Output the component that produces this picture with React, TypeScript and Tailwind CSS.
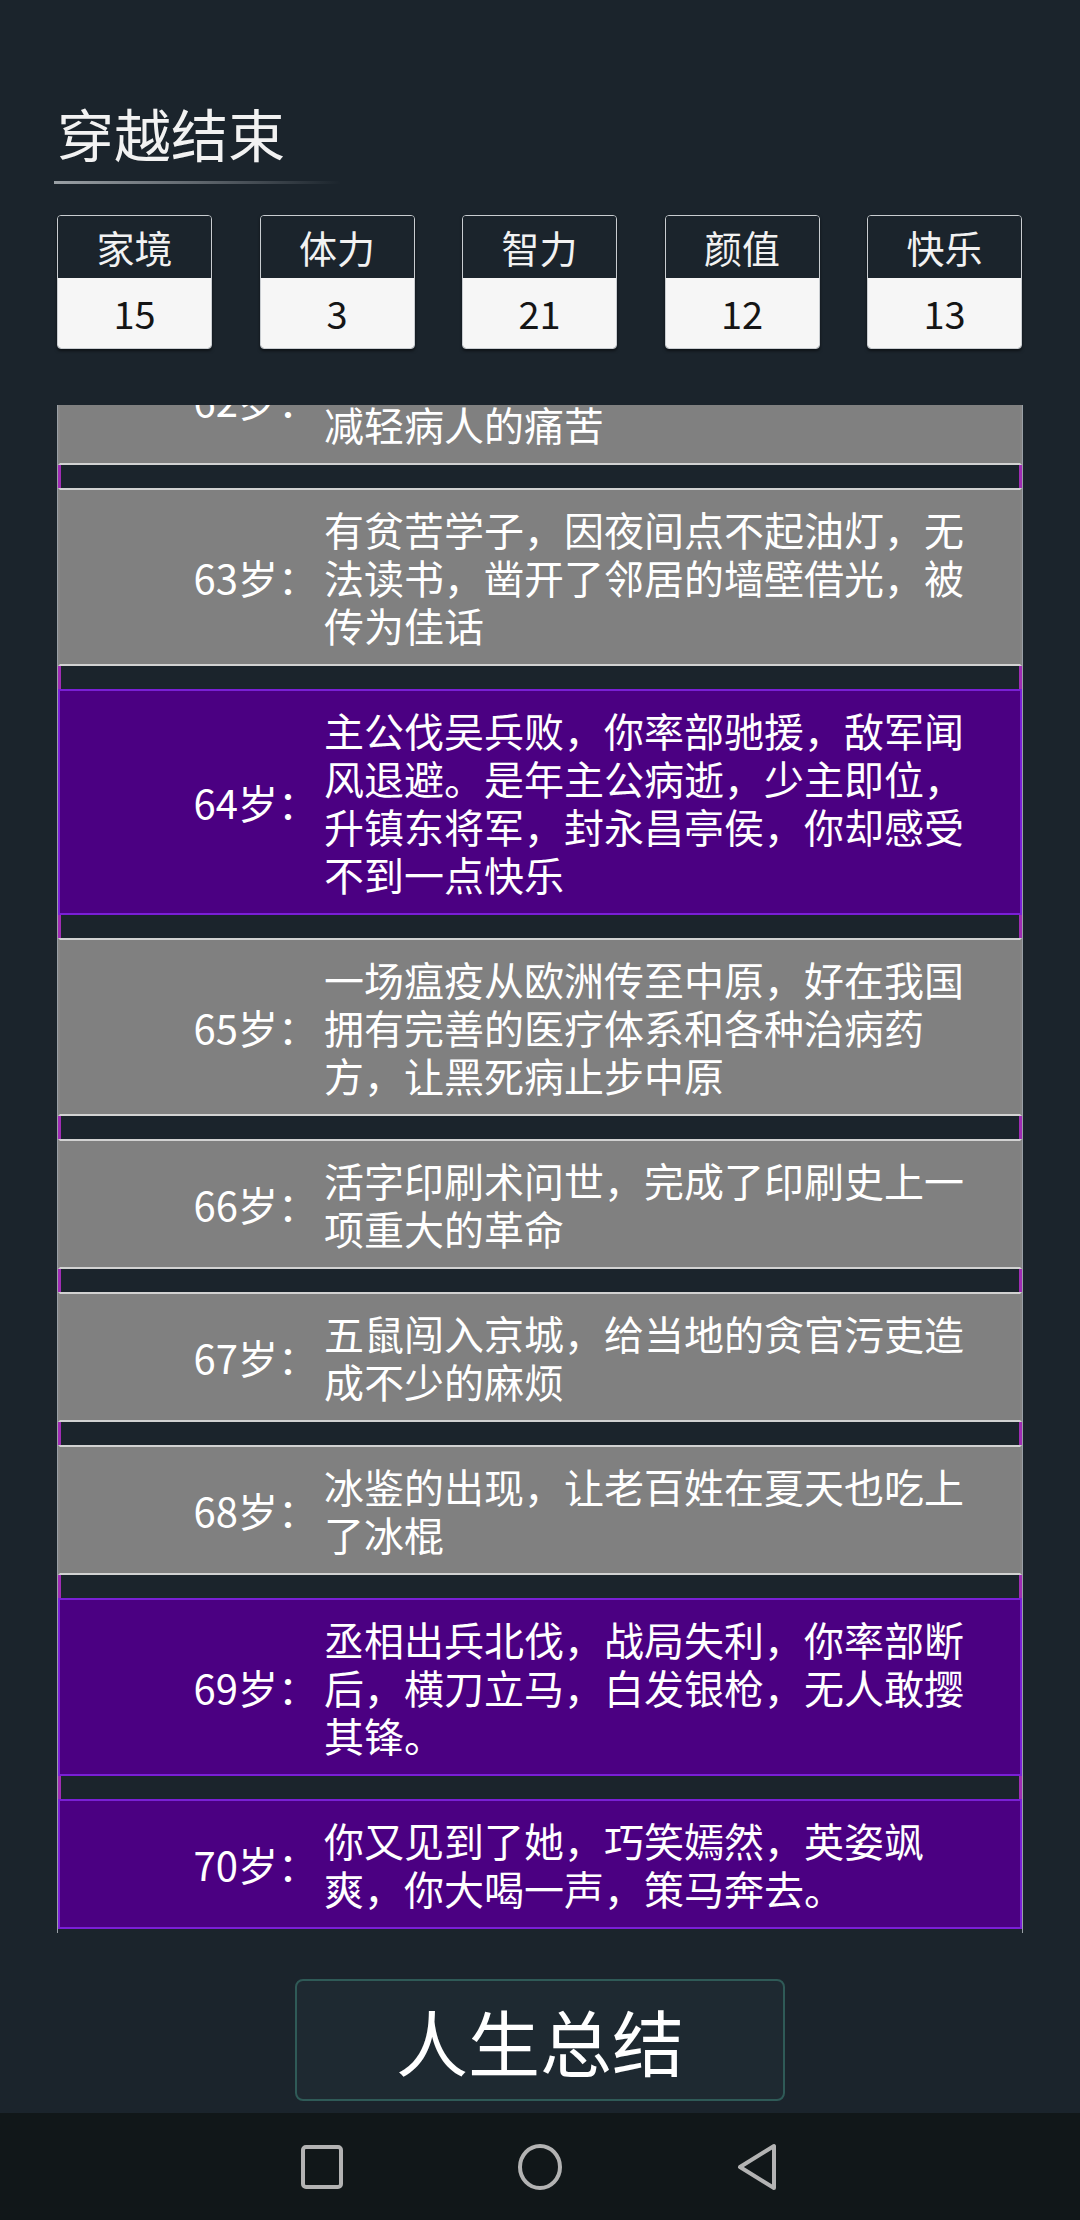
import React from "react";

type Entry = { age: number; text: string; kind: "gray" | "purple" };

const stats = [
  { label: "家境", value: 15 },
  { label: "体力", value: 3 },
  { label: "智力", value: 21 },
  { label: "颜值", value: 12 },
  { label: "快乐", value: 13 },
];

const entries: Entry[] = [
  { age: 62, text: "神医华佗研制出了麻沸散，可以大大减轻病人的痛苦", kind: "gray" },
  { age: 63, text: "有贫苦学子，因夜间点不起油灯，无法读书，凿开了邻居的墙壁借光，被传为佳话", kind: "gray" },
  { age: 64, text: "主公伐吴兵败，你率部驰援，敌军闻风退避。是年主公病逝，少主即位，升镇东将军，封永昌亭侯，你却感受不到一点快乐", kind: "purple" },
  { age: 65, text: "一场瘟疫从欧洲传至中原，好在我国拥有完善的医疗体系和各种治病药方，让黑死病止步中原", kind: "gray" },
  { age: 66, text: "活字印刷术问世，完成了印刷史上一项重大的革命", kind: "gray" },
  { age: 67, text: "五鼠闯入京城，给当地的贪官污吏造成不少的麻烦", kind: "gray" },
  { age: 68, text: "冰鉴的出现，让老百姓在夏天也吃上了冰棍", kind: "gray" },
  { age: 69, text: "丞相出兵北伐，战局失利，你率部断后，横刀立马，白发银枪，无人敢撄其锋。", kind: "purple" },
  { age: 70, text: "你又见到了她，巧笑嫣然，英姿飒爽，你大喝一声，策马奔去。", kind: "purple" },
];

function StatBox({ label, value }: { label: string; value: number }) {
  return (
    <div className="w-[155px] overflow-hidden rounded-[4px] border border-[#c9cdd1] shadow-[0_2px_3px_rgba(0,0,0,0.5)]">
      <div className="flex h-[62px] items-center justify-center bg-[#1b242c] text-[38px] leading-none text-[#f2f2f2]">
        {label}
      </div>
      <div className="flex h-[70px] items-center justify-center bg-[#f6f6f6] text-[38px] leading-none text-[#151515]">
        {value}
      </div>
    </div>
  );
}

function Row({ entry }: { entry: Entry }) {
  const card =
    entry.kind === "purple"
      ? "border-2 border-[#7a1fd6] bg-[#4b0082]"
      : "border-2 border-[#d2d2d2] border-x-[#848484] bg-[#808080]";
  return (
    <div>
      <div className="h-[23px] border-x-[3px] border-x-[#a02cb4]" />
      <div className={`flex items-center py-[15px] ${card}`}>
        <div className="w-[258px] shrink-0 text-right text-[40px] leading-[48px] text-white">
          {entry.age}岁：
        </div>
        <div className="ml-[6px] w-[660px] text-[40px] leading-[48px] text-white">
          {entry.text}
        </div>
      </div>
    </div>
  );
}

export default function App() {
  return (
    <div
      className="flex h-[2220px] w-[1080px] flex-col overflow-hidden bg-[#1b242c]"
      style={{ fontFamily: '"Noto Sans CJK SC", "Noto Sans", sans-serif' }}
    >
      <div className="px-[57px] pt-[104px]">
        <h1 className="text-[57px] leading-[57px] text-[#f2f2f2]">穿越结束</h1>
        <div className="-ml-[3px] mt-[20px] h-[3px] w-[287px] bg-linear-to-r from-[#9aa0a5] via-[#60676e] to-transparent" />

        <div className="mt-[31px] flex justify-between pr-[1px]">
          {stats.map((s) => (
            <StatBox key={s.label} label={s.label} value={s.value} />
          ))}
        </div>

        <div className="mt-[56px] h-[1528px] overflow-hidden border-x border-x-[#9aa0a6]">
          <div className="-mt-[93px]">
            {entries.map((e) => (
              <Row key={e.age} entry={e} />
            ))}
          </div>
        </div>
      </div>

      <div className="mt-[46px] flex justify-center">
        <button className="flex h-[122px] w-[490px] items-center justify-center rounded-[8px] border-2 border-[#2f5a57] bg-[#1e2931] text-[72px] leading-none text-white">
          人生总结
        </button>
      </div>

      <div className="mt-auto flex h-[107px] items-center justify-center gap-[158px] bg-[#111719]">
        <div className="flex w-[60px] justify-center">
          <svg width="44" height="46" viewBox="0 0 44 46" fill="none">
            <rect x="3" y="3" width="38" height="40" rx="3" stroke="#b3b3b3" strokeWidth="4" />
          </svg>
        </div>
        <div className="flex w-[60px] justify-center">
          <svg width="48" height="48" viewBox="0 0 48 48" fill="none">
            <ellipse cx="24" cy="24" rx="20" ry="21" stroke="#b3b3b3" strokeWidth="4" />
          </svg>
        </div>
        <div className="flex w-[60px] justify-center">
          <svg width="46" height="50" viewBox="0 0 46 50" fill="none">
            <path d="M39 4 L39 46 L5 25 Z" stroke="#b3b3b3" strokeWidth="4" strokeLinejoin="round" />
          </svg>
        </div>
      </div>
    </div>
  );
}
